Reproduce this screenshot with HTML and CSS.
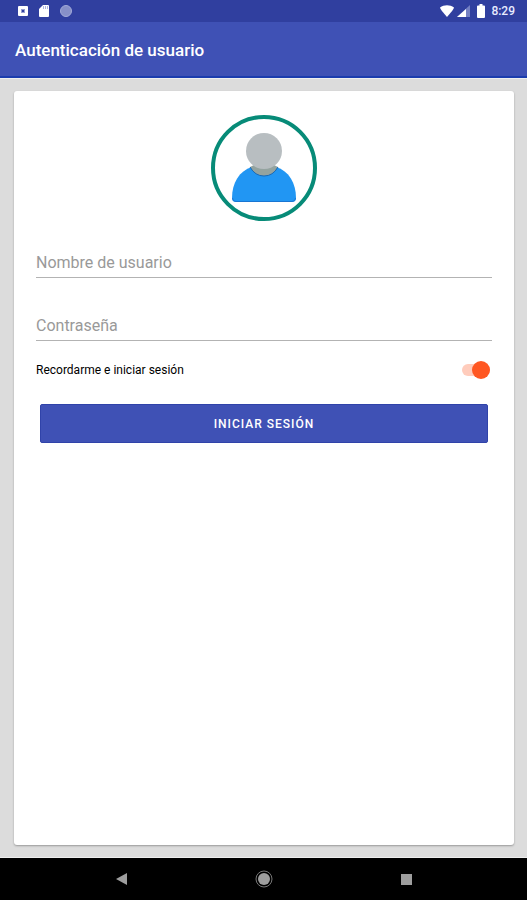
FILE: index.html
```html
<!DOCTYPE html>
<html lang="es">
<head>
<meta charset="utf-8">
<meta name="viewport" content="width=device-width, initial-scale=1">
<title>Autenticación de usuario</title>
<link rel="stylesheet" href="styles.css">
</head>
<body>
<div class="status">
  <div class="status-group notices">
    <svg width="12" height="12" viewBox="0 0 12 12" aria-hidden="true"><rect x="1" y="1" width="10" height="10" rx="1" fill="#fff"/><path fill="#98a0d2" d="M4 4h4v4H4z"/><path fill="#303f9f" d="M5 5h2v2H5z"/></svg>
    <svg width="12" height="14" viewBox="0 0 12 14" aria-hidden="true"><path fill="#fff" d="M5 1h5a1 1 0 0 1 1 1v10a1 1 0 0 1-1 1H2a1 1 0 0 1-1-1V5z"/><path stroke="#aeb6e2" d="M5.500 2v3M7.500 2v3M9.500 2v3"/></svg>
    <svg width="14" height="14" viewBox="0 0 14 14" aria-hidden="true"><circle cx="7" cy="7" r="5.500" fill="#8790c8" stroke="#a3abd9"/></svg>
  </div>
  <div class="status-group">
    <svg width="16" height="12" viewBox="0 0 16 12" aria-hidden="true"><path fill="#fff" d="M1 2.500C5-.5 11-.5 15 2.500Q15 4 8 12Q1 4 1 2.500z"/></svg>
    <svg width="14" height="12" viewBox="0 0 14 12" aria-hidden="true"><path fill="#7480c3" d="M13 0v12H0z"/><path fill="#fff" d="M9 4v8H0z"/></svg>
    <svg class="battery" width="8" height="14" viewBox="0 0 8 14" aria-hidden="true"><path fill="#fff" d="M2.500 0h3v1.500H7a1 1 0 0 1 1 1V13a1 1 0 0 1-1 1H1a1 1 0 0 1-1-1V2.500a1 1 0 0 1 1-1h1.500z"/></svg>
    <time class="clock">8:29</time>
  </div>
</div>
<header class="appbar"><h1>Autenticación de usuario</h1></header>
<main>
  <form class="card">
    <svg class="avatar" width="106" height="106" viewBox="1 1 106 106" role="img" aria-label="Usuario">
      <circle cx="54" cy="54" r="51" fill="#fff" stroke="#078b78" stroke-width="4"/>
      <path fill="#2196f3" d="M22 84c0-15 7-27 20-31h24c13 4 20 16 20 31q0 4-4 4H26q-4 0-4-4z"/>
      <path d="M22.500 84q0 3.500 3.500 3.500h56q3.500 0 3.500-3.500" fill="none" stroke="#1976d2"/>
      <path fill="#94a39f" d="M40 53q5 9 14 9t14-9l-4-2H44z"/>
      <path fill="none" stroke="#1769b5" d="M40 53q5 9 14 9t14-9"/>
      <circle cx="54" cy="37" r="18" fill="#b8bec1"/>
    </svg>
    <input class="field" type="text" placeholder="Nombre de usuario" aria-label="Nombre de usuario">
    <input class="field" type="password" placeholder="Contraseña" aria-label="Contraseña">
    <div class="remember">
      <label for="remember">Recordarme e iniciar sesión</label>
      <input class="switch" id="remember" type="checkbox" role="switch" checked>
    </div>
    <button class="submit" type="button">INICIAR SESIÓN</button>
  </form>
</main>
<nav class="navbar">
  <button type="button" aria-label="Atrás"><svg width="18" height="18" viewBox="0 0 18 18"><path fill="#9e9e9e" d="M3 9l11-6v12z"/></svg></button>
  <button type="button" aria-label="Inicio"><svg width="18" height="18" viewBox="0 0 18 18"><circle cx="9" cy="9" r="8" fill="none" stroke="#777"/><circle cx="9" cy="9" r="6" fill="#9e9e9e"/></svg></button>
  <button type="button" aria-label="Recientes"><svg width="18" height="18" viewBox="0 0 18 18"><path fill="#9e9e9e" d="M4 4h11v11H4z"/></svg></button>
</nav>
</body>
</html>
```
FILE: styles.css
```css
* { box-sizing: border-box; }

body {
  margin: 0;
  min-height: 100vh;
  display: flex;
  flex-direction: column;
  background: #dcdcdc;
  font-family: Roboto, "Liberation Sans", sans-serif;
}

svg { display: block; }

.status {
  display: flex;
  justify-content: space-between;
  align-items: center;
  height: 22px;
  padding: 0 12px 0 17px;
  background: #303f9f;
}

.status-group { display: flex; align-items: center; gap: 2px; }
.notices { gap: 9px; }
.battery { margin: 0 4px; }

.clock {
  color: #e8ebff;
  font-size: 12px;
  line-height: 14px;
  font-weight: 500;
}

.appbar {
  display: flex;
  align-items: center;
  height: 56px;
  padding: 2px 15px 0;
  background: #3f51b5;
  border-bottom: 2px solid #1b3cae;
}

h1 {
  margin: 0;
  color: #fff;
  font-size: 17px;
  line-height: 24px;
  font-weight: 500;
}

main {
  flex: 1;
  display: flex;
  padding: 12px 13px 12px 14px;
  border-top: 1px solid #eee;
  border-bottom: 1px solid #eee;
}

.card {
  flex: 1;
  display: flex;
  flex-direction: column;
  padding: 24px 22px;
  background: #fff;
  border-radius: 3px;
  box-shadow: 0 1px 2px #999;
}

.avatar { align-self: center; margin-bottom: 26px; }

.field {
  width: 100%;
  height: 31px;
  margin: 0 0 32px;
  padding: 0;
  border: 0;
  border-bottom: 1px solid #b3b3b3;
  border-radius: 0;
  outline: 0;
  background: transparent;
  color: #222;
  font: 400 16px/24px Roboto, "Liberation Sans", sans-serif;
}

.field::placeholder { color: #999; opacity: 1; }
.field + .remember { margin-top: -13px; }

.remember {
  display: flex;
  align-items: center;
  justify-content: space-between;
  height: 20px;
  padding-right: 2px;
  color: #000;
  font-size: 12px;
  line-height: 16px;
}

.switch {
  appearance: none;
  display: flex;
  align-items: center;
  justify-content: flex-end;
  width: 28px;
  height: 12px;
  margin: 0;
  border-radius: 6px;
  background: #ffccbc;
}

.switch::before {
  content: "";
  flex: none;
  width: 18px;
  height: 18px;
  border-radius: 50%;
  background: #ff5722;
}

.switch:not(:checked) { justify-content: flex-start; background: #bbb; }
.switch:not(:checked)::before { background: #eee; }

.submit {
  height: 39px;
  margin: 24px 4px 0;
  padding: 0;
  border: 1px solid #3043a9;
  border-radius: 2px;
  background: #3f51b5;
  color: #fff;
  font: 500 12px/16px Roboto, "Liberation Sans", sans-serif;
  letter-spacing: 1px;
}

.navbar {
  display: flex;
  justify-content: center;
  gap: 124px;
  height: 42px;
  background: #000;
}

.navbar button {
  display: grid;
  place-items: center;
  width: 18px;
  padding: 0;
  border: 0;
  background: transparent;
}
```
